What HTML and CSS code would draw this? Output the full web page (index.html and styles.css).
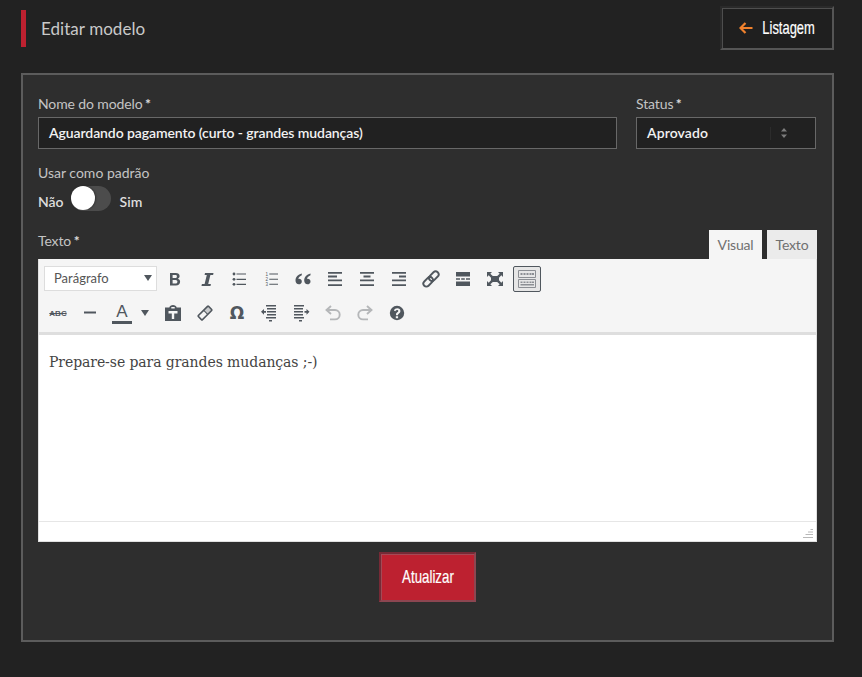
FILE: index.html
```html
<!DOCTYPE html>
<html lang="pt-BR">
<head>
<meta charset="utf-8">
<title>Editar modelo</title>
<link rel="stylesheet" href="styles.css">
</head>
<body>
<header class="top">
  <h1 class="title">Editar modelo</h1>
  <a class="list-btn"><svg class="arrow" viewBox="0 0 14 12" width="14" height="12"><path d="M6.500 1 1.500 6l5 5M2 6h11.500" fill="none" stroke="#f0812d" stroke-width="2.200"/></svg><span class="cond list-text">Listagem</span></a>
</header>
<main class="panel">
  <div class="row-top">
    <div class="field">
      <label class="lbl req">Nome do modelo <b>*</b></label>
      <div class="input name">Aguardando pagamento (curto - grandes mudanças)</div>
    </div>
    <div class="field">
      <label class="lbl req">Status <b>*</b></label>
      <div class="input select">Aprovado
        <i class="sep"></i>
        <svg class="updown" viewBox="0 0 6 10" width="6" height="10"><path d="M3 0 6 3.500H0zM3 10 0 6.500h6z" fill="#7d7d7d"/></svg>
      </div>
    </div>
  </div>
  <div class="default-block">
    <div class="lbl">Usar como padrão</div>
    <div class="switch-row"><span class="sw-text">Não</span><span class="switch"><span class="knob"></span></span><span class="sw-text">Sim</span></div>
  </div>
  <div class="editor-head">
    <label class="lbl req">Texto <b>*</b></label>
    <div class="tabs"><span class="tab active">Visual</span><span class="tab">Texto</span></div>
  </div>
  <div class="editor">
    <div class="toolbar">
      <div class="tool-row">
        <div class="format">Parágrafo<i class="caret"></i></div>
        <span class="t"><svg viewBox="0 0 20 20"><path d="M5 4h5.800c2.400 0 3.800 1.200 3.800 3.100 0 1.300-.7 2.200-1.800 2.700 1.400.4 2.300 1.400 2.300 2.900 0 2.300-1.700 3.800-4.200 3.800H5zm2.600 2.100v2.900h2.700c1 0 1.600-.5 1.600-1.500s-.6-1.400-1.600-1.400zm0 4.800v3.600h3c1.100 0 1.800-.7 1.800-1.800s-.7-1.800-1.800-1.800z" fill-rule="evenodd"/></svg></span>
        <span class="t"><svg viewBox="0 0 20 20"><path d="M8 4h8.500l-.4 2h-2.700l-2.200 9h2.700l-.4 2H4.500l.4-2h2.700L9.800 6H7.600z"/></svg></span>
        <span class="t"><svg viewBox="0 0 20 20"><path d="M7.500 4.400H17v1.200H7.500zM7.500 9.700H17v1.200H7.500zM7.500 14.700H17v1.200H7.500z"/><circle cx="5" cy="5" r="1.400"/><circle cx="5" cy="10.300" r="1.400"/><circle cx="5" cy="15.300" r="1.400"/></svg></span>
        <span class="t"><svg viewBox="0 0 20 20"><path d="M8.300 4.400H17v1.100H8.300zM8.300 9.700H17v1.100H8.300zM8.300 14.700H17v1.100H8.300z"/><text x="4.500" y="6.500" class="mini">1</text><text x="4.500" y="11.800" class="mini">2</text><text x="4.500" y="17" class="mini">3</text></svg></span>
        <span class="t"><svg viewBox="0 0 20 20"><path d="M8.800 4.500C5 5.500 2.500 8 2.500 11.500c0 2.300 1.400 3.800 3.300 3.800 1.700 0 3-1.200 3-2.900S7.600 9.700 6 9.700c-.3 0-.6 0-.8.100.4-1.500 1.800-2.900 3.600-3.600zM17.500 4.500c-3.800 1-6.300 3.500-6.300 7 0 2.300 1.400 3.800 3.300 3.800 1.700 0 3-1.200 3-2.900s-1.200-2.700-2.800-2.700c-.3 0-.6 0-.8.100.4-1.500 1.800-2.900 3.600-3.600z"/></svg></span>
        <span class="t"><svg viewBox="0 0 20 20"><path d="M3 3h14v1.800H3zM3 6.600h9v1.800H3zM3 10.500h14v1.800H3zM3 15.200h14V17H3z"/></svg></span>
        <span class="t"><svg viewBox="0 0 20 20"><path d="M3 3h14v1.800H3zM6.500 6.600h7v1.800h-7zM3 10.500h14v1.800H3zM3 15.200h14V17H3z"/></svg></span>
        <span class="t"><svg viewBox="0 0 20 20"><path d="M3 3h14v1.800H3zM10 6.600h7v1.800h-7zM3 10.500h14v1.800H3zM3 15.200h14V17H3z"/></svg></span>
        <span class="t"><svg viewBox="0 0 20 20"><g transform="rotate(-45 10 10)" fill="none" stroke="#50575e" stroke-width="1.900"><rect x="0.500" y="7" width="11" height="6" rx="3"/><rect x="8.500" y="7" width="11" height="6" rx="3"/></g></svg></span>
        <span class="t"><svg viewBox="0 0 20 20"><path d="M3 3h14v4.500H3zM3 12.500h14V17H3zM3 9.300h4v1.400H3zM8.200 9.300h3.600v1.400H8.200zM13 9.300h4v1.400h-4z"/></svg></span>
        <span class="t"><svg viewBox="0 0 20 20"><path d="M2 3h5L5.300 4.700 7.800 7h4.400l2.500-2.300L13 3h5v5l-1.700-1.700L14 8.700v2.600l2.300 2.400L18 12v5h-5l1.700-1.700L12.200 13H7.800l-2.500 2.300L7 17H2v-5l1.700 1.700L6 11.300V8.700L3.700 6.300 2 8z"/></svg></span>
        <span class="t pressed"><svg viewBox="0 0 20 20"><path d="M1.500 1.500h17v7h-17zM1.500 10.500h17v8h-17z" fill="none" stroke="#8c8f94"/><path d="M3.500 4h2v2h-2zM6.500 4h2v2h-2zM9.500 4h2v2h-2zM12.500 4h2v2h-2zM15 4h2v2h-2zM3.500 12.500h2v1.500h-2zM6.500 12.500h2v1.500h-2zM9.500 12.500h2v1.500h-2zM12.500 12.500h2v1.500h-2zM15 12.500h2v1.500h-2zM3.500 15h13.500v1.500H3.500z" fill="#8c8f94"/></svg></span>
      </div>
      <div class="tool-row">
        <span class="t abc">ABC</span>
        <span class="t"><svg viewBox="0 0 20 20"><path d="M4 8.500h12v2H4z"/></svg></span>
        <span class="t color"><span class="a">A</span></span>
        <i class="caret small"></i>
        <span class="t"><svg viewBox="0 0 20 20"><path d="M2 4.500h4.300C6.600 3 8.200 2 10 2s3.400 1 3.700 2.500H18V18H2zM8.300 4h3.400v1.500H8.300zM5.500 8v2.500h3.300V16h2.400v-5.500h3.300V8z" fill-rule="evenodd"/></svg></span>
        <span class="t"><svg viewBox="0 0 20 20"><g transform="rotate(-45 10 10)"><rect x="2" y="6.300" width="16" height="7.400" rx="1.500" fill="#50575e"/><rect x="3.600" y="7.900" width="6.900" height="4.200" fill="#f5f5f5"/><rect x="11.500" y="7.900" width="5" height="4.200" fill="#c9cbcd"/></g></svg></span>
        <span class="t omega">Ω</span>
        <span class="t"><svg viewBox="0 0 20 20"><path d="M7 2h10v1.500H7zM8 5h9v1.500H8zM8 8h9v1.500H8zM8 11h9v1.500H8zM7 14h10v1.500H7zM10 17h3v1.500h-3zM2 8.800l3-2.800v2h2v1.700H5v2z"/></svg></span>
        <span class="t"><svg viewBox="0 0 20 20"><path d="M3 2h10v1.500H3zM3 5h9v1.500H3zM3 8h9v1.500H3zM3 11h9v1.500H3zM3 14h10v1.500H3zM8 17h3v1.500H8zM18.500 8.800l-3-2.800v2h-2v1.700h2v2z"/></svg></span>
        <span class="t off"><svg viewBox="0 0 20 20"><path d="M8 3 3.500 7 8 11M4 7h8a4.700 4.700 0 0 1 0 9.400H7" fill="none" stroke="#b5b7b9" stroke-width="1.900"/></svg></span>
        <span class="t off"><svg viewBox="0 0 20 20"><path d="M12 3l4.500 4L12 11M16 7H8a4.700 4.700 0 0 0 0 9.400h5" fill="none" stroke="#b5b7b9" stroke-width="1.900"/></svg></span>
        <span class="t"><svg viewBox="0 0 20 20"><path d="M10 2.800a7.200 7.200 0 1 0 0 14.400 7.200 7.200 0 0 0 0-14.400zM9 12.200v-.6c0-1.100.5-1.700 1.300-2.300.7-.5 1-.8 1-1.300 0-.6-.5-1-1.200-1-.8 0-1.400.4-1.800 1.200L6.900 7.400C7.500 6 8.700 5.200 10.300 5.200c1.900 0 3.100 1.100 3.100 2.700 0 1.100-.5 1.800-1.400 2.500-.7.500-1 .8-1 1.300v.5zm-.2 1h2.300v2.100H8.800z" fill-rule="evenodd"/></svg></span>
      </div>
    </div>
    <div class="content">Prepare-se para grandes mudanças ;-)</div>
    <div class="statusbar"><svg class="grip" viewBox="0 0 10 10" width="10" height="10"><path d="M7.500 .5H10M5 3h5M2.500 5.500H10M0 8.500h10" stroke="#b8b8b8" stroke-width="1" fill="none"/></svg></div>
  </div>
  <div class="actions"><button class="save" type="button"><span class="cond save-text">Atualizar</span></button></div>
</main>
</body>
</html>
```

FILE: styles.css
```css
* { box-sizing: border-box; }
html, body { margin: 0; height: 100%; }
body {
  background: #222;
  color: #ccc;
  font-family: Lato, sans-serif;
  font-size: 14px;
  padding: 8px 28px 0 21px;
  overflow: hidden;
}
.top {
  display: flex;
  justify-content: space-between;
  align-items: flex-start;
  height: 65px;
}
.title {
  margin: 2px 0 0;
  height: 37px;
  line-height: 37px;
  border-left: 5px solid #bd2130;
  padding-left: 15px;
  font-size: 17px;
  font-weight: 400;
  letter-spacing: .05px;
  color: #c9c9c9;
}
.list-btn {
  display: flex;
  align-items: center;
  width: 114px;
  height: 44px;
  margin-top: -2px;
  padding-left: 17px;
  background: #1f1f1f;
  border: 2px solid;
  border-color: #2a2a2a #555 #555 #2a2a2a;
  box-shadow: inset 1px 1px 0 #4e4e4e;
  color: #fff;
}
.cond {
  display: inline-block;
  font-family: "Liberation Sans", sans-serif;
  font-size: 19px;
  color: #fff;
  -webkit-text-stroke: .2px #fff;
  transform: scaleX(.68);
  white-space: nowrap;
}
.list-text { margin-left: -3px; }
.save-text { transform: scaleX(.7); }
.panel {
  width: 813px;
  height: 569px;
  background: #2e2e2e;
  border: 2px solid #5c5c5c;
  padding: 20px 15px 0;
}
.row-top {
  display: grid;
  grid-template-columns: 579px 180px;
  column-gap: 19px;
}
.lbl {
  display: block;
  color: #c4c4c4;
  font-size: 14px;
  line-height: 17px;
  margin-bottom: 5px;
}
.req { letter-spacing: -.12px; }
.lbl b { color: #ddd; margin-left: -1px; }
.input {
  height: 32px;
  background: #212121;
  border: 1px solid #686868;
  color: #f2f2f2;
  font-size: 14px;
  font-weight: 600;
  line-height: 30px;
  padding-left: 10px;
}
.name { letter-spacing: -.09px; }
.select {
  position: relative;
  line-height: 29px;
  letter-spacing: .1px;
}
.sep {
  position: absolute;
  left: 133px;
  top: 9px;
  width: 1px;
  height: 13px;
  background: #2c2c2c;
}
.updown {
  position: absolute;
  right: 28px;
  top: 10px;
}
.default-block { margin-top: 15px; }
.switch-row {
  display: flex;
  align-items: flex-start;
  gap: 8px;
  height: 26px;
  margin-top: 2px;
  font-weight: 600;
  color: #ddd;
}
.sw-text { line-height: 32px; }
.sw-text:last-child { margin-left: 1px; }
.switch {
  display: block;
  width: 40px;
  height: 25px;
  margin-left: -1px;
  border-radius: 13px;
  background: #4c4c4c;
}
.knob {
  display: block;
  width: 24px;
  height: 24px;
  border-radius: 50%;
  background: #fff;
  box-shadow: 1px 0 2px rgba(0, 0, 0, .35);
}
.editor-head {
  display: flex;
  justify-content: space-between;
  align-items: flex-end;
  margin-top: 18px;
  width: 779px;
}
.editor-head .lbl { margin-bottom: 10px; }
.tabs { display: flex; gap: 5px; }
.tab {
  width: 50px;
  height: 29px;
  background: #ebebeb;
  color: #707070;
  font-size: 14px;
  line-height: 29px;
  letter-spacing: -.2px;
  text-align: center;
}
.tab.active { width: 53px; background: #f5f5f5; }
.editor {
  width: 779px;
  height: 283px;
  display: flex;
  flex-direction: column;
  background: #fff;
  border: 1px solid #e0e0e0;
  border-top: 0;
}
.toolbar {
  height: 76px;
  padding: 3px 5px 0;
  background: #f5f5f5;
  border-bottom: 3px solid #dedede;
}
.tool-row {
  display: flex;
  align-items: center;
  height: 34px;
}
.format {
  display: flex;
  align-items: center;
  justify-content: space-between;
  width: 113px;
  height: 25px;
  margin: -1px 2px 0 0;
  padding: 0 1px 2px 9px;
  background: #fff;
  border: 1px solid #ddd;
  color: #555;
  font-size: 13px;
}
.caret {
  display: block;
  width: 0;
  height: 0;
  border-left: 4px solid transparent;
  border-right: 4px solid transparent;
  border-top: 6px solid #50575e;
  margin-right: 3px;
}
.caret.small { margin: 0 8px 0 11px; }
.t {
  display: flex;
  align-items: center;
  justify-content: center;
  flex: none;
  width: 32px;
  height: 26px;
  color: #50575e;
}
.t svg { width: 20px; height: 20px; fill: #50575e; }
.mini { font: 400 4.500px "Liberation Sans", sans-serif; fill: #50575e; }
.pressed {
  width: 28px;
  border: 1px solid #50575e;
  border-radius: 2px;
  background: #e6e6e6;
  margin-left: 2px;
}
.abc {
  margin-left: -2px;
  font: 700 8px "Liberation Sans", sans-serif;
  text-decoration: line-through;
}
.color { width: 16px; margin: 0 0 0 8px; overflow: visible; }
.color .a {
  flex: none;
  width: 20px;
  border-bottom: 3px solid #50575e;
  font: 400 17px/19px "Liberation Sans", sans-serif;
  text-align: center;
}
.omega { font: 700 17px "DejaVu Sans", sans-serif; }
.content {
  flex: 1;
  padding: 17px 10px;
  font-family: "DejaVu Serif", serif;
  font-size: 14px;
  line-height: 20px;
  letter-spacing: -.08px;
  color: #444;
}
.statusbar {
  position: relative;
  height: 20px;
  border-top: 1px solid #e6e6e6;
}
.grip { position: absolute; right: 3px; bottom: 2px; }
.actions {
  display: flex;
  justify-content: center;
  margin-top: 10px;
}
.save {
  width: 97px;
  height: 50px;
  background: #bd2130;
  border: 2px solid;
  border-color: #762a36 #8c4651 #8c4651 #762a36;
  box-shadow: inset 1px 1px 0 #a34a56;
  padding: 0;
}
```
